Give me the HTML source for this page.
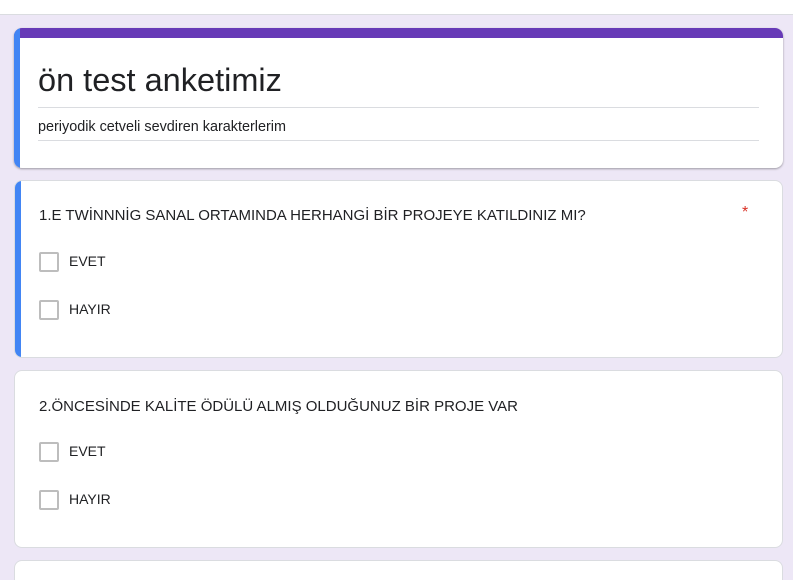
<!DOCTYPE html>
<html><head><meta charset="utf-8"><style>
html,body{margin:0;padding:0}
body{width:793px;height:580px;overflow:hidden;background:#ede7f6;position:relative;font-family:"Liberation Sans",sans-serif;color:#202124}
.top{position:absolute;left:0;top:0;width:793px;height:14px;background:#fff;border-bottom:1px solid #dadce0}
.card{position:absolute;left:14px;width:769px;background:#fff;border:1px solid #dadce0;border-radius:8px;box-sizing:border-box;overflow:hidden}
.bl{position:absolute;left:0;top:0;bottom:0;width:6px;background:#4285f4}
.q{position:absolute;left:24px;font-size:15px;letter-spacing:0;white-space:nowrap}
.cb{position:absolute;left:24px;width:16px;height:16px;border:2px solid #bdbdbd;border-radius:2px}
.lb{position:absolute;left:54px;font-size:14px}
</style></head><body>
<div class="top"></div>
<div class="card" style="top:28px;height:140px;border:none;box-shadow:0 1px 2px rgba(0,0,0,.35)">
 <div style="position:absolute;left:0;top:0;right:0;height:10px;background:#673ab7"></div>
 <div class="bl"></div>
 <div style="position:absolute;left:24px;top:32px;font-size:32.5px;line-height:40px">ön test anketimiz</div>
 <div style="position:absolute;left:24px;top:79px;width:721px;height:1px;background:#dadce0"></div>
 <div style="position:absolute;left:24px;top:90px;font-size:14.4px;line-height:18px">periyodik cetveli sevdiren karakterlerim</div>
 <div style="position:absolute;left:24px;top:112px;width:721px;height:1px;background:#dadce0"></div>
</div>
<div class="card" style="top:180px;height:178px">
 <div class="bl"></div>
 <div class="q" style="top:26px">1.E TWİNNNİG SANAL ORTAMINDA HERHANGİ BİR PROJEYE KATILDINIZ MI?</div>
 <div style="position:absolute;left:727px;top:23px;color:#d93025;font-size:16px">*</div>
 <div class="cb" style="top:71px"></div><div class="lb" style="top:72px">EVET</div>
 <div class="cb" style="top:119px"></div><div class="lb" style="top:120px">HAYIR</div>
</div>
<div class="card" style="top:370px;height:178px">
 <div class="q" style="top:27px">2.ÖNCESİNDE KALİTE ÖDÜLÜ ALMIŞ OLDUĞUNUZ BİR PROJE VAR</div>
 <div class="cb" style="top:71px"></div><div class="lb" style="top:72px">EVET</div>
 <div class="cb" style="top:119px"></div><div class="lb" style="top:120px">HAYIR</div>
</div>
<div class="card" style="top:560px;height:20px;border-bottom:none;border-radius:8px 8px 0 0"></div>
</body></html>
